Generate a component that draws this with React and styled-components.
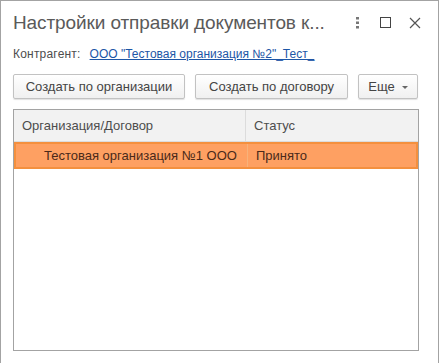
import React from 'react';
import styled, { createGlobalStyle } from 'styled-components';

const GlobalStyle = createGlobalStyle`
  html, body {
    margin: 0;
    padding: 0;
    background: #fff;
  }
  body {
    font-family: "Liberation Sans", Arial, sans-serif;
    font-size: 13px;
    color: #4d4d4d;
  }
`;

const Window = styled.div`
  box-sizing: border-box;
  width: 439px;
  height: 363px;
  border: 1px solid #a3a3a3;
  border-bottom: none;
  background: #fff;
  padding: 0 12px 0 12px;
  display: flex;
  flex-direction: column;
`;

const TitleBar = styled.div`
  display: flex;
  align-items: center;
  height: 43px;
`;

const Title = styled.div`
  flex: 1;
  font-size: 19px;
  letter-spacing: -0.1px;
  color: #5a5a5a;
  white-space: nowrap;
  overflow: hidden;
`;

const TitleButtons = styled.div`
  display: flex;
  align-items: center;
  margin-right: -3px;
`;

const IconButton = styled.div`
  width: 29px;
  height: 29px;
  display: flex;
  align-items: center;
  justify-content: center;
  color: #555;
`;

const CounterRow = styled.div`
  display: flex;
  align-items: center;
  height: 20px;
  font-size: 12px;
  gap: 9px;
`;

const Label = styled.span`
  letter-spacing: 0.2px;
`;

const Link = styled.a`
  color: #1d56a6;
  text-decoration: underline;
  cursor: pointer;
`;

const Toolbar = styled.div`
  display: flex;
  gap: 10px;
  margin-top: 10px;
`;

const Button = styled.div`
  box-sizing: border-box;
  height: 25px;
  width: ${(p) => p.w}px;
  display: flex;
  align-items: center;
  justify-content: center;
  gap: 7px;
  border: 1px solid #c2c2c2;
  border-radius: 2px;
  background: linear-gradient(#ffffff, #f0f0f0);
  box-shadow: 0 1px 1px rgba(0, 0, 0, 0.12);
  font-size: 13px;
  color: #444;
`;

const Caret = styled.span`
  width: 0;
  height: 0;
  border-left: 3px solid transparent;
  border-right: 3px solid transparent;
  border-top: 3px solid #666;
  margin-top: 1px;
`;

const Table = styled.div`
  box-sizing: border-box;
  margin-top: 10px;
  width: 406px;
  height: 242px;
  border: 1px solid #a3a3a3;
  display: flex;
  flex-direction: column;
`;

const Row = styled.div`
  display: grid;
  grid-template-columns: 232px 1fr;
  height: ${(p) => p.h}px;
  box-sizing: border-box;
  background: ${(p) => (p.selected ? '#fea062' : '#f2f2f2')};
  border: ${(p) => (p.selected ? '2px solid #f4903e' : 'none')};
  border-bottom: ${(p) => (p.selected ? '2px solid #f4903e' : '1px solid #dcdcdc')};
  color: ${(p) => (p.selected ? '#4a2a1a' : '#4d4d4d')};
`;

const Cell = styled.div`
  display: flex;
  align-items: center;
  padding-left: ${(p) => p.indent || 8}px;
  border-right: ${(p) => (p.divider ? `1px solid ${p.dividerColor}` : 'none')};
  white-space: nowrap;
  overflow: hidden;
`;

function DotsIcon() {
  return (
    <svg width="4" height="12" viewBox="0 0 4 12">
      <rect x="1" y="0" width="3" height="2.5" fill="#777" />
      <rect x="1" y="4.5" width="3" height="2.5" fill="#777" />
      <rect x="1" y="9" width="3" height="2.5" fill="#777" />
    </svg>
  );
}

function SquareIcon() {
  return (
    <svg width="11" height="11" viewBox="0 0 11 11">
      <rect x="0.5" y="0.5" width="10" height="10" fill="none" stroke="#444" strokeWidth="1" />
    </svg>
  );
}

function CloseIcon() {
  return (
    <svg width="12" height="12" viewBox="0 0 12 12">
      <path d="M1 1 L11 11 M11 1 L1 11" stroke="#555" strokeWidth="1.2" />
    </svg>
  );
}

export default function App() {
  return (
    <>
      <GlobalStyle />
      <Window>
        <TitleBar>
          <Title>Настройки отправки документов к...</Title>
          <TitleButtons>
            <IconButton>
              <DotsIcon />
            </IconButton>
            <IconButton>
              <SquareIcon />
            </IconButton>
            <IconButton>
              <CloseIcon />
            </IconButton>
          </TitleButtons>
        </TitleBar>
        <CounterRow>
          <Label>Контрагент:</Label>
          <Link>ООО "Тестовая организация №2"_Тест_</Link>
        </CounterRow>
        <Toolbar>
          <Button w={172}>Создать по организации</Button>
          <Button w={153}>Создать по договору</Button>
          <Button w={60}>
            Еще <Caret />
          </Button>
        </Toolbar>
        <Table>
          <Row h={32}>
            <Cell divider dividerColor="#dcdcdc">Организация/Договор</Cell>
            <Cell>Статус</Cell>
          </Row>
          <Row h={27} selected>
            <Cell indent={28} divider dividerColor="#f7b27a">
              Тестовая организация №1 ООО
            </Cell>
            <Cell>Принято</Cell>
          </Row>
        </Table>
      </Window>
    </>
  );
}
